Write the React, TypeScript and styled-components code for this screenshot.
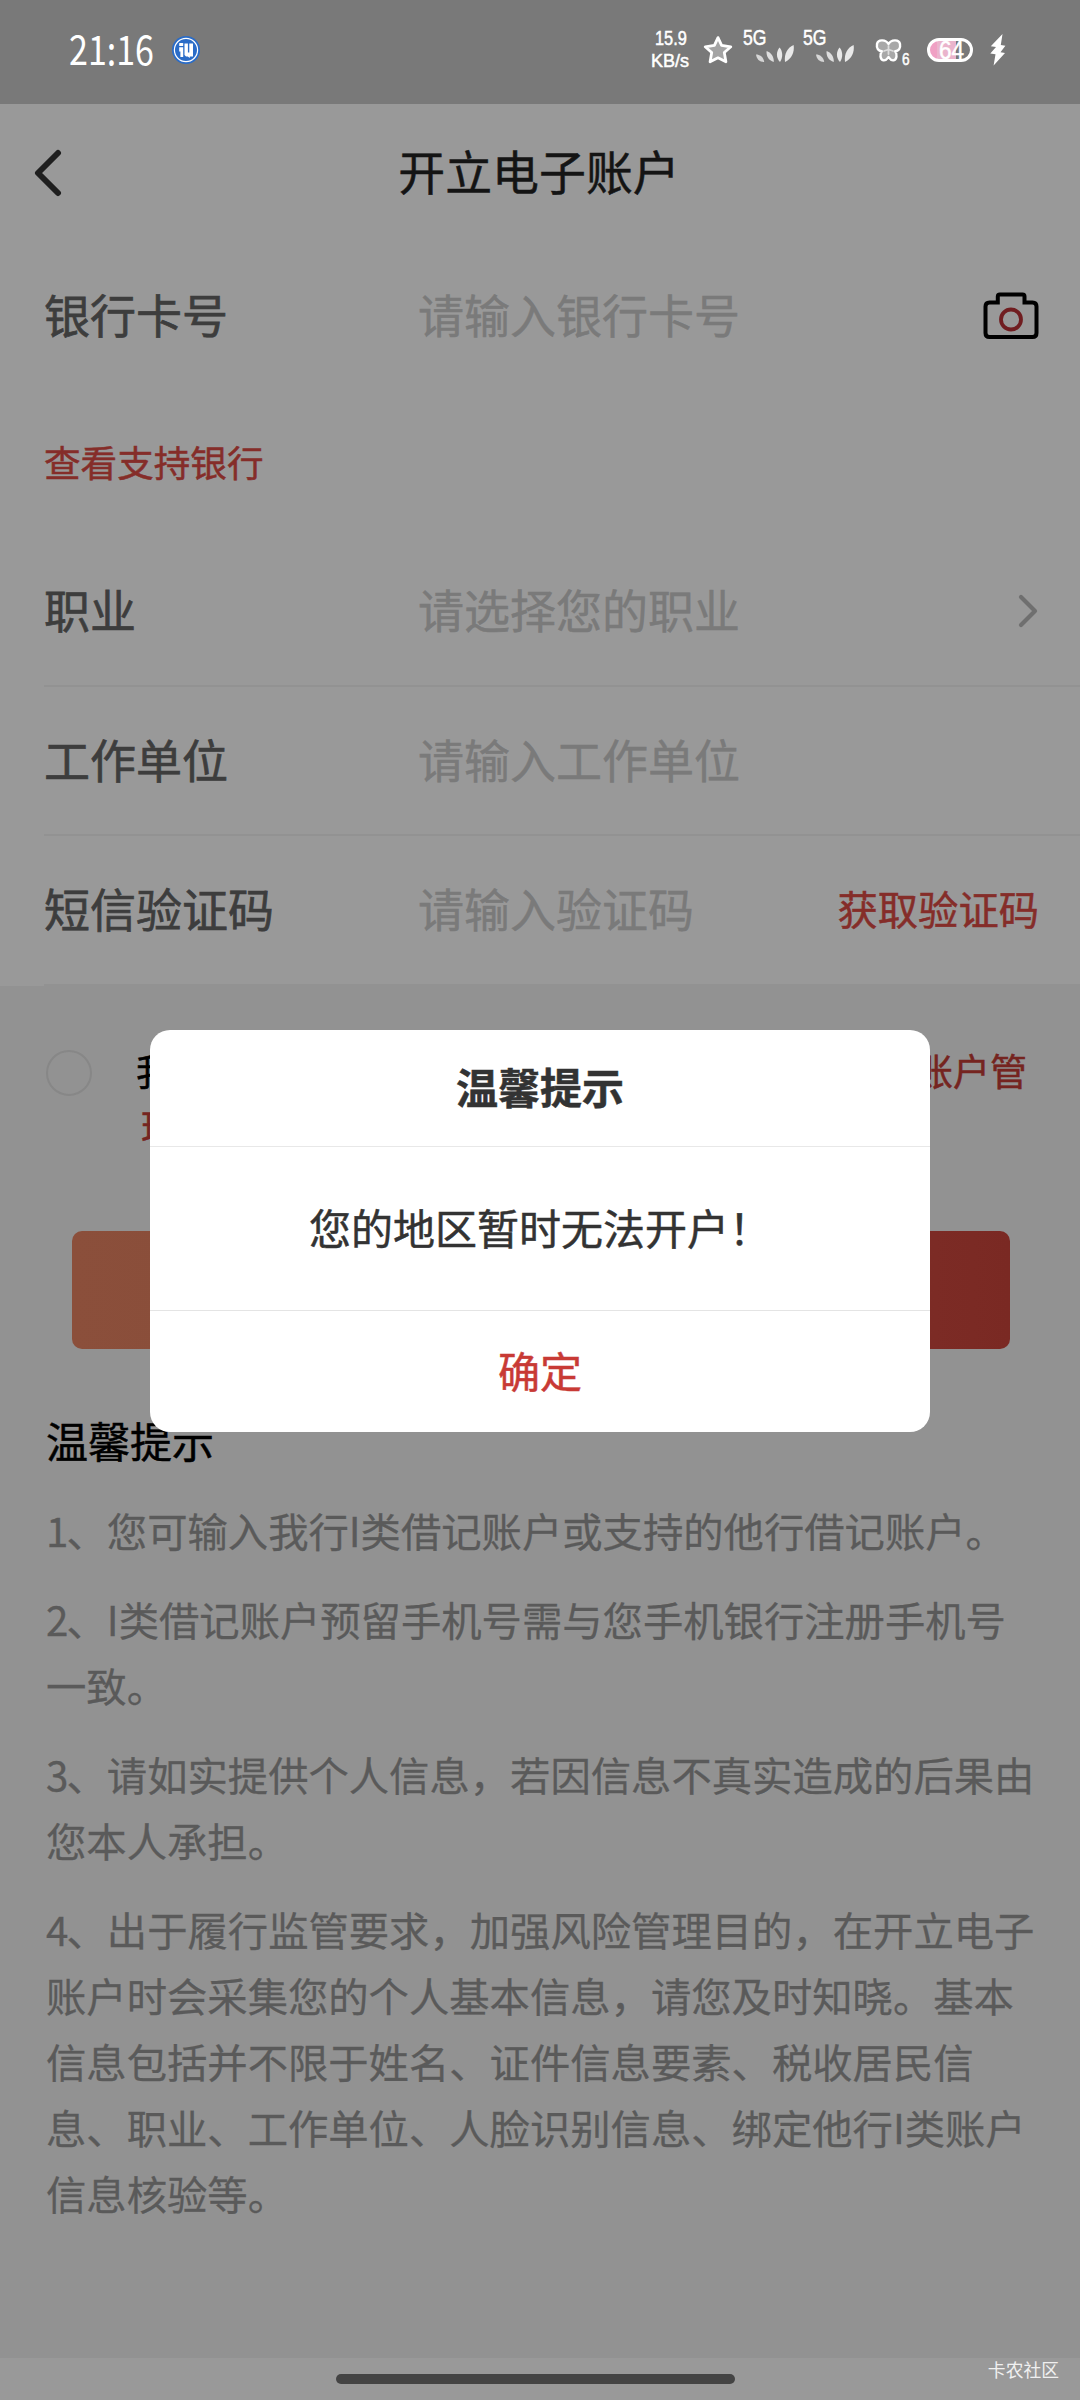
import React from "react";
import styled, { createGlobalStyle } from "styled-components";

const GlobalStyle = createGlobalStyle`
  * { box-sizing: border-box; }
  html, body { margin: 0; padding: 0; background: #929292; }
  body { font-family: "Noto Sans CJK SC", "Noto Sans", sans-serif; }
  p, h1, h2 { margin: 0; font-weight: 400; }
  svg { display: block; flex: none; }
`;

const Screen = styled.div`
  position: relative;
  width: 1080px;
  height: 2400px;
  display: flex;
  flex-direction: column;
  background: #929292;
  overflow: hidden;
  white-space: nowrap;
  -webkit-text-stroke: 0.5px currentColor;
`;

const StatusBar = styled.header`
  flex: none;
  height: 104px;
  padding: 0 74px 4px 69px;
  display: flex;
  align-items: center;
  justify-content: space-between;
  background: #797979;
  color: #fff;
`;

const StatusGroup = styled.div`
  display: flex;
  align-items: center;
`;

const Squeeze = styled.span<{ $size: number; $width: number; $scale: number; $height: number; $latin?: boolean }>`
  display: block;
  flex: none;
  width: ${(p) => p.$width}px;
  height: ${(p) => p.$height}px;
  font-family: ${(p) => (p.$latin ? '"Liberation Sans", sans-serif' : "inherit")};
  font-size: ${(p) => p.$size}px;
  line-height: ${(p) => p.$height}px;
  transform: scaleX(${(p) => p.$scale});
  transform-origin: left center;
`;

const Clock = styled.div`
  padding-bottom: 6px;
  -webkit-text-stroke-width: 0;
`;

const Speed = styled.div`
  display: flex;
  flex-direction: column;
  gap: 1px;
  width: 40px;
  margin: 0 12px 2px 0;
`;

const SpeedValue = styled.div`
  padding-left: 4px;
`;

const Signal = styled.div`
  width: 60px;
  height: 48px;
  padding-left: 1px;
  display: flex;
  flex-direction: column;
`;

const Leaves = styled.div`
  margin: -6px 0 0 12px;
`;

const Hotspot = styled.div`
  display: flex;
  align-items: flex-end;
  margin: 0 17px 0 13px;
`;

const HotspotCount = styled.div`
  margin-bottom: -5px;
`;

const Battery = styled.div`
  display: grid;
  align-items: center;
  width: 46px;
  height: 24px;
  margin-right: 17px;
  padding-left: 9px;
  border: 3px solid #fff;
  border-radius: 12px;
  background: linear-gradient(90deg, #f0a0c4 0 7px, #eab4cc 7px 26px, #797979 26px);
`;

const TitleBar = styled.div`
  flex: none;
  height: 131px;
  display: grid;
  grid-template-columns: 200px 1fr 200px;
  align-items: center;
  padding-left: 34px;
  padding-right: 36px;
  background: #999;
`;

const BackIcon = styled.div`
  padding-top: 6px;
`;

const Title = styled.h1`
  text-align: center;
  font-size: 46.9px;
  line-height: 60px;
  color: #141414;
`;

const Form = styled.section`
  flex: none;
  height: 751px;
  display: flex;
  flex-direction: column;
  background: #999;
`;

const Row = styled.div<{ $height: number; $line?: boolean }>`
  flex: none;
  height: ${(p) => p.$height}px;
  margin-left: 44px;
  padding: 0 41px ${(p) => (p.$line ? 6 : 3)}px 0;
  display: flex;
  align-items: center;
  border-bottom: ${(p) => (p.$line ? "2px solid #929292" : "0")};
`;

const Label = styled.span`
  width: 374px;
  font-size: 46px;
  line-height: 60px;
  color: #3d3d3d;
  -webkit-text-stroke-width: 0.7px;
`;

const Placeholder = styled.span`
  flex: 1;
  font-size: 46px;
  line-height: 60px;
  color: #7a7a7a;
`;

const BankLink = styled.a`
  flex: none;
  height: 143px;
  padding: 41px 0 0 44px;
  font-size: 36.6px;
  line-height: 54px;
  color: #852d29;
`;

const CodeButton = styled.span`
  padding-top: 2px;
  font-size: 40.3px;
  line-height: 60px;
  color: #852d29;
`;

const ChevronBox = styled.div`
  padding-top: 6px;
`;

const CameraBox = styled.div`
  padding-top: 4px;
`;

const Agreement = styled.section`
  flex: none;
  height: 245px;
  padding: 56px 53px 0 46px;
  display: grid;
  grid-template-columns: 90px 1fr;
  align-items: start;
`;

const Radio = styled.span`
  width: 46px;
  height: 46px;
  margin-top: 8px;
  border: 2px solid #878787;
  border-radius: 50%;
`;

const AgreementText = styled.div`
  display: flex;
  flex-direction: column;
  font-size: 37px;
  line-height: 56px;
  color: #000;
`;

const AgreementLine = styled.div<{ $indent?: number }>`
  display: flex;
  justify-content: space-between;
  padding-left: ${(p) => p.$indent ?? 0}px;
`;

const RedText = styled.span`
  color: #752420;
`;

const SubmitButton = styled.div`
  flex: none;
  height: 118px;
  margin: 0 70px 0 72px;
  border-radius: 10px;
  background: linear-gradient(90deg, #8b4f3b, #8a4e3a 10%, #7d2c26 88%, #7a2923);
`;

const Tips = styled.section`
  display: flex;
  flex-direction: column;
  padding: 61px 0 0 46px;
`;

const TipsTitle = styled.h2`
  height: 60px;
  margin-bottom: 27px;
  font-size: 42px;
  line-height: 60px;
  color: #000;
`;

const Tip = styled.p`
  margin-bottom: 23px;
  font-size: 40.35px;
  line-height: 66px;
  color: #5a5a5a;
  -webkit-text-stroke-width: 0.3px;
`;

const TipNumber = styled.span`
  display: inline-block;
  width: 20.5px;
  letter-spacing: -2px;
`;

const TipLine = styled.span`
  display: block;
`;

const NavBar = styled.footer`
  flex: none;
  height: 42px;
  margin-top: auto;
  padding: 3px 21px 0 336px;
  display: flex;
  justify-content: space-between;
  align-items: flex-start;
  background: #999;
`;

const Handle = styled.div`
  width: 399px;
  height: 10px;
  margin-top: 13px;
  border-radius: 5px;
  background: #444;
`;

const Watermark = styled.span`
  font-size: 17.8px;
  line-height: 16px;
  color: #f0f0f0;
  -webkit-text-stroke-width: 0;
`;

const Dialog = styled.div`
  position: absolute;
  left: 150px;
  top: 1030px;
  width: 780px;
  height: 402px;
  display: flex;
  flex-direction: column;
  border-radius: 20px;
  background: #fff;
  color: #333;
  text-align: center;
`;

const DialogTitle = styled.div`
  height: 117px;
  padding-bottom: 6px;
  display: grid;
  place-items: center;
  border-bottom: 1px solid #e8e8e8;
  font-size: 42px;
  font-weight: 700;
`;

const DialogBody = styled.div`
  height: 164px;
  padding-bottom: 5px;
  display: grid;
  place-items: center;
  border-bottom: 1px solid #e4e4e4;
  font-size: 42px;
`;

const DialogAction = styled.div`
  flex: 1;
  display: grid;
  place-items: center;
  padding-bottom: 5px;
  font-size: 42px;
  color: #c83a35;
`;

const BadgeBox = styled.div`
  margin-left: 20px;
`;

const StarBox = styled.div`
  margin-right: 9px;
`;

const AppBadge = () => (
  <BadgeBox>
    <svg width="28" height="28" viewBox="0 0 28 28">
      <circle cx="14" cy="14" r="14" fill="#2a6cc8" />
      <circle cx="14" cy="14" r="11.6" fill="none" stroke="#fff" strokeWidth="1.2" />
      <rect x="7.2" y="7" width="4" height="3" rx="0.6" fill="#fff" />
      <path d="M7.2 11.2h4V21H8.4v-5.500h-1.200z" fill="#fff" />
      <path d="M12.500 7.500h3.400v9h1.400v-9h3.700V20.500h-3.200V22l-2-1.500h-1.800l-1.500-1.500z" fill="#fff" />
    </svg>
  </BadgeBox>
);

const StarIcon = () => (
  <StarBox>
    <svg width="30" height="30" viewBox="0 0 30 30">
      <path
        d="M15 2.600L18.600 10.300L27.800 11.800L21.300 17.500L22.900 26.800L15 22.800L7.100 26.800L8.700 17.500L2.200 11.800L11.400 10.300Z"
        fill="#a4a4a4"
        stroke="#fff"
        strokeWidth="2.800"
        strokeLinejoin="round"
      />
    </svg>
  </StarBox>
);

const LeafBars = () => (
  <svg width="40" height="20" viewBox="0 0 40 20" fill="#e9e9e9">
    <path d="M1 10.500C5 10.500 8.500 13 9.200 18C4.500 18 1.500 15 1 10.500Z" fill="#d6d6d6" />
    <path d="M11.600 7C16 8.500 19 12.500 18.800 18C13.500 16.500 11 12 11.600 7Z" fill="#dedede" />
    <path d="M24.600 3.500C28 7.500 28 13.500 25 18C21 14 21 7.500 24.600 3.500Z" />
    <path d="M38.600 1C39.800 8 36.500 15 30 18C29 10.500 32 4 38.600 1Z" />
  </svg>
);

const Butterfly = () => (
  <svg width="27" height="25" viewBox="0 0 27 25">
    <path
      d="M13.500 6C11 1.500 3 .8 2 6C1.200 10.500 3.500 13 6.800 13.200C4.600 16 5 21.500 8.400 22.300C11.500 22.800 12.300 20.500 13.500 19C14.700 20.500 15.500 22.800 18.600 22.300C22 21.500 22.400 16 20.200 13.200C23.500 13 25.800 10.500 25 6C24 .8 16 1.500 13.500 6Z"
      fill="#a8a8a8"
      stroke="#fff"
      strokeWidth="2.400"
      strokeLinejoin="round"
    />
    <path d="M13.500 8V11.500M13.500 11.500L9 13M13.500 11.500L18 13M13.500 12V16" stroke="#ddd" strokeWidth="1.800" strokeLinecap="round" fill="none" />
  </svg>
);

const Bolt = () => (
  <svg width="16" height="32" viewBox="0 0 16 32">
    <path d="M12.500 0L.8 12.200L6 13L.3 19.500L5.500 20.200L3.600 31.500L15 19L10.500 18.300L15.400 11.800L10.800 11Z" fill="#fff" />
  </svg>
);

const FiveG = () => (
  <Signal>
    <Squeeze $latin $size={22} $width={26} $height={24} $scale={0.8}>5G</Squeeze>
    <Leaves>
      <LeafBars />
    </Leaves>
  </Signal>
);

const fields = [
  { label: "工作单位", hint: "请输入工作单位", height: 149, action: "" },
  { label: "短信验证码", hint: "请输入验证码", height: 150, action: "获取验证码" },
];

const tips = [
  ["您可输入我行I类借记账户或支持的他行借记账户。"],
  ["I类借记账户预留手机号需与您手机银行注册手机号", "一致。"],
  ["请如实提供个人信息，若因信息不真实造成的后果由", "您本人承担。"],
  [
    "出于履行监管要求，加强风险管理目的，在开立电子",
    "账户时会采集您的个人基本信息，请您及时知晓。基本",
    "信息包括并不限于姓名、证件信息要素、税收居民信",
    "息、职业、工作单位、人脸识别信息、绑定他行I类账户",
    "信息核验等。",
  ],
];

export default function App() {
  return (
    <>
      <GlobalStyle />
      <Screen>
        <StatusBar>
          <StatusGroup>
            <Clock>
              <Squeeze $size={41} $width={83} $height={50} $scale={0.83}>21:16</Squeeze>
            </Clock>
            <AppBadge />
          </StatusGroup>
          <StatusGroup>
            <Speed>
              <SpeedValue>
                <Squeeze $latin $size={19.5} $width={35} $height={22} $scale={0.84}>15.9</Squeeze>
              </SpeedValue>
              <Squeeze $latin $size={19} $width={40} $height={22} $scale={0.95}>KB/s</Squeeze>
            </Speed>
            <StarIcon />
            <FiveG />
            <FiveG />
            <Hotspot>
              <Butterfly />
              <HotspotCount>
                <Squeeze $latin $size={16} $width={8} $height={16} $scale={0.85}>6</Squeeze>
              </HotspotCount>
            </Hotspot>
            <Battery>
              <Squeeze $latin $size={25} $width={26} $height={18} $scale={0.9}>64</Squeeze>
            </Battery>
            <Bolt />
          </StatusGroup>
        </StatusBar>

        <TitleBar>
          <BackIcon>
            <svg width="28" height="48" viewBox="0 0 28 48">
              <path d="M24 4L4 24L24 44" fill="none" stroke="#1f1f1f" strokeWidth="6" strokeLinecap="round" strokeLinejoin="round" />
            </svg>
          </BackIcon>
          <Title>开立电子账户</Title>
        </TitleBar>

        <Form>
          <Row $height={159}>
            <Label>银行卡号</Label>
            <Placeholder>请输入银行卡号</Placeholder>
            <CameraBox>
              <svg width="56" height="48" viewBox="0 0 56 48" fill="none">
                <path
                  d="M6.500 11.500H14.800V5.500Q14.800 3.500 16.800 3.500H39.500Q41.500 3.500 41.500 5.500V11.500H49.500Q53.500 11.500 53.500 15.500V42Q53.500 46 49.500 46H6.500Q2.500 46 2.500 42V15.500Q2.500 11.500 6.500 11.500Z"
                  stroke="#000"
                  strokeWidth="4"
                />
                <circle cx="28" cy="28.500" r="10" stroke="#701d20" strokeWidth="3.800" />
              </svg>
            </CameraBox>
          </Row>
          <BankLink>查看支持银行</BankLink>
          <Row $height={150} $line>
            <Label>职业</Label>
            <Placeholder>请选择您的职业</Placeholder>
            <ChevronBox>
              <svg width="21" height="34" viewBox="0 0 21 34">
                <path d="M3 3L17 17L3 31" fill="none" stroke="#6f6f6f" strokeWidth="4.200" strokeLinecap="round" strokeLinejoin="round" />
              </svg>
            </ChevronBox>
          </Row>
          {fields.map((f) => (
            <Row key={f.label} $height={f.height} $line>
              <Label>{f.label}</Label>
              <Placeholder>{f.hint}</Placeholder>
              {f.action && <CodeButton>{f.action}</CodeButton>}
            </Row>
          ))}
        </Form>

        <Agreement>
          <Radio />
          <AgreementText>
            <AgreementLine>
              <span>我</span>
              <RedText>账户管</RedText>
            </AgreementLine>
            <AgreementLine $indent={5}>
              <RedText>理</RedText>
            </AgreementLine>
          </AgreementText>
        </Agreement>

        <SubmitButton />

        <Tips>
          <TipsTitle>温馨提示</TipsTitle>
          {tips.map((lines, i) => (
            <Tip key={i}>
              {lines.map((line, j) => (
                <TipLine key={j}>
                  {j === 0 && (
                    <>
                      <TipNumber>{i + 1}</TipNumber>、
                    </>
                  )}
                  {line}
                </TipLine>
              ))}
            </Tip>
          ))}
        </Tips>

        <NavBar>
          <Handle />
          <Watermark>卡农社区</Watermark>
        </NavBar>

        <Dialog>
          <DialogTitle>温馨提示</DialogTitle>
          <DialogBody>您的地区暂时无法开户！</DialogBody>
          <DialogAction>确定</DialogAction>
        </Dialog>
      </Screen>
    </>
  );
}
